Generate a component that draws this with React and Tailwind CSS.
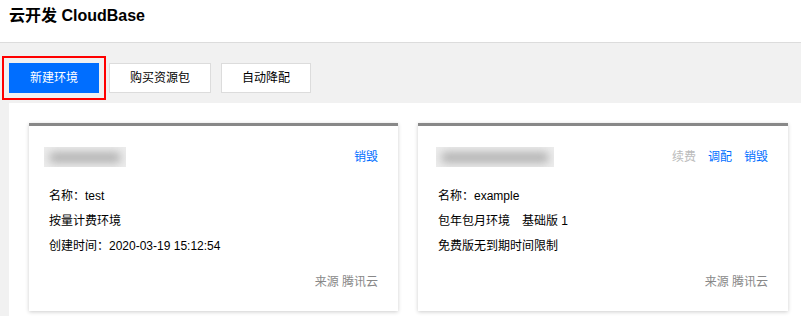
import React from 'react';

const font = { fontFamily: '"Liberation Sans", "Noto Sans CJK SC", sans-serif' };

function Blur({ w }) {
  return (
    <div className={`${w} h-[20px] bg-[#ececec] overflow-hidden flex items-center px-[5px]`}>
      <div className="flex-1 h-[11px] bg-[#b4b4b4] rounded-full blur-[4px]"></div>
    </div>
  );
}

function EnvCard({ width, blurW, blurOff, actions, lines }) {
  return (
    <div className={`${width} bg-white border-t-[3px] border-[#888] shadow-[0_1px_4px_rgba(0,0,0,0.2)] px-5 pt-[21px] pb-[19px]`}>
      {/* header */}
      <div className={`flex items-center justify-between h-[20px] ${blurOff}`}>
        <Blur w={blurW} />
        <div className="flex gap-[12px] text-[12px]">
          {actions.map((a) => (
            <span key={a.label} className={a.disabled ? 'text-[#bbb]' : 'text-[#006eff]'}>
              {a.label}
            </span>
          ))}
        </div>
      </div>

      {/* body */}
      <div className="mt-[19px] flex flex-col gap-[5px] text-[12px] leading-[20px] text-[#000]">
        {lines.map((l, i) => (
          <div key={i}>{l}</div>
        ))}
      </div>

      {/* footer */}
      <div className="mt-[16px] text-right text-[12px] leading-[20px] text-[#888]">来源 腾讯云</div>
    </div>
  );
}

export default function App() {
  return (
    <div style={font} className="w-[801px] h-[316px] overflow-hidden bg-[#f1f1f1] flex flex-col">
      {/* Header */}
      <div className="h-[43px] shrink-0 bg-white border-b border-[#dcdcdc] flex items-center px-[9px]">
        <h1 className="text-[16px] font-bold text-black -mt-[10px]">云开发 CloudBase</h1>
      </div>

      {/* Toolbar */}
      <div className="flex gap-[10px] pl-[9px] pt-[20px] shrink-0">
        <button className="w-[90px] h-[30px] bg-[#006eff] text-white text-[12px] outline-2 outline-[#ff0000] outline-offset-[5px]">
          新建环境
        </button>
        <button className="w-[102px] h-[30px] bg-white border border-[#dcdcdc] text-[12px] text-black">
          购买资源包
        </button>
        <button className="w-[90px] h-[30px] bg-white border border-[#dcdcdc] text-[12px] text-black">
          自动降配
        </button>
      </div>

      {/* Panel */}
      <div className="flex-1 ml-[9px] mt-[10px] bg-white pl-[20px] pt-[20px] flex gap-[20px] items-start">
        <EnvCard
          width="w-[369px]"
          blurW="w-[82px]"
          blurOff="-ml-[5px]"
          actions={[{ label: '销毁' }]}
          lines={['名称：test', '按量计费环境', '创建时间：2020-03-19 15:12:54']}
        />
        <EnvCard
          width="w-[370px]"
          blurW="w-[118px]"
          blurOff="-ml-[2px]"
          actions={[{ label: '续费', disabled: true }, { label: '调配' }, { label: '销毁' }]}
          lines={['名称：example', '包年包月环境\u3000基础版 1', '免费版无到期时间限制']}
        />
      </div>
    </div>
  );
}
